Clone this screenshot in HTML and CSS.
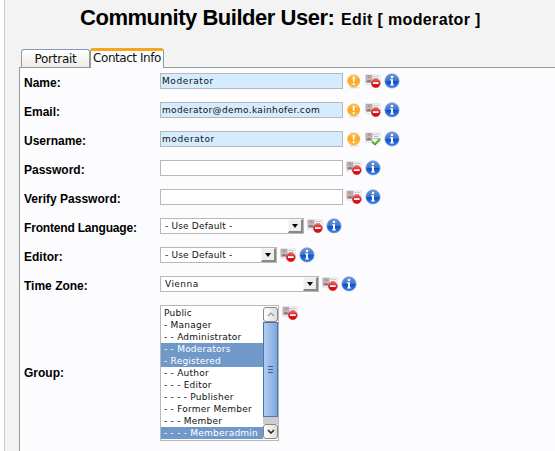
FILE: index.html
```
<!DOCTYPE html>
<html lang="en">
<head>
<meta charset="utf-8">
<title>Community Builder User</title>
<link rel="stylesheet" href="styles.css">
</head>
<body>
<svg class="defs" width="0" height="0">
  <defs>
    <linearGradient id="gold" x2="0" y2="1"><stop stop-color="#ffc658"/><stop offset=".5" stop-color="#fba51f"/><stop offset="1" stop-color="#ffc33b"/></linearGradient>
    <linearGradient id="blue" x2="0" y2="1"><stop stop-color="#6f96d9"/><stop offset=".48" stop-color="#3f74ce"/><stop offset=".52" stop-color="#0b50c8"/><stop offset="1" stop-color="#3a80ea"/></linearGradient>
    <linearGradient id="red" x2="0" y2="1"><stop stop-color="#ef6a6a"/><stop offset=".5" stop-color="#d91c20"/><stop offset="1" stop-color="#dc0000"/></linearGradient>
    <symbol id="alert" viewBox="0 0 16 16">
      <ellipse cx="8" cy="14.7" rx="5.5" ry=".8" fill="#ddd"/>
      <circle cx="7.7" cy="7.9" r="6" fill="url(#gold)" stroke="#eda33b" stroke-width=".7"/>
      <path d="M6.7 3.7h2l-.3 5.4H7z" fill="#fff"/><circle cx="7.7" cy="11" r="1.1" fill="#fff"/>
    </symbol>
    <symbol id="card" viewBox="0 0 16 16">
      <path d="M.4 1.6h15.2v10H.4z" fill="#f0f0f0" stroke="#dedede" stroke-width=".5"/>
      <path d="M1.2 2.4h5.8v7H1.2z" fill="#c9b4dc" stroke="#a598ac" stroke-width=".8"/>
      <path d="M2 9V7.8Q4 6.4 6 7.8V9z" fill="#7c8068"/><circle cx="4.1" cy="5.3" r="1.5" fill="#e0b060"/><path d="M2.8 4.3Q4 3 5.4 4.3" fill="none" stroke="#85705a" stroke-width=".8"/>
      <path d="M8.5 3.5h2m1 0h2M9 5.5h4M9 7.5h5" stroke="#b5b5b5" stroke-width=".9"/>
    </symbol>
    <symbol id="denied" viewBox="0 0 16 16">
      <use href="#card"/>
      <circle cx="10.8" cy="10.2" r="4.5" fill="url(#red)" stroke="#d84040" stroke-width=".4"/><path d="M8 9.2h5.6v1.8H8z" fill="#fff"/>
    </symbol>
    <symbol id="allowed" viewBox="0 0 16 16">
      <use href="#card"/>
      <path d="M7 10.5l3 2.7 5-5.2" fill="none" stroke="#48a72a" stroke-width="2.2"/><path d="M7 10.1l3 2.3 5-4.8" fill="none" stroke="#8cdc61" stroke-width=".7"/>
    </symbol>
    <symbol id="info" viewBox="0 0 16 16">
      <circle cx="8" cy="7.9" r="7.1" fill="url(#blue)" stroke="#7296d5" stroke-width=".7"/>
      <circle cx="8" cy="4" r="1.3" fill="#fff"/><path d="M6 6.3h3v5.2h1v1H6v-1h1V7.3H6z" fill="#fff"/>
    </symbol>
  </defs>
</svg>
<main class="page">
  <h1 class="title">Community Builder User: <small>Edit [ moderator ]</small></h1>
  <nav class="tabs"><span class="tab">Portrait</span><span class="tab active">Contact Info</span></nav>
  <form class="panel">
    <div class="row"><b class="label">Name:</b><div class="field"><span class="box required">Moderator</span><svg class="icon"><use href="#alert"/></svg><svg class="icon"><use href="#denied"/></svg><svg class="icon"><use href="#info"/></svg></div></div>
    <div class="row"><b class="label">Email:</b><div class="field"><span class="box required email">moderator@demo.kainhofer.com</span><svg class="icon"><use href="#alert"/></svg><svg class="icon"><use href="#denied"/></svg><svg class="icon"><use href="#info"/></svg></div></div>
    <div class="row"><b class="label">Username:</b><div class="field"><span class="box required">moderator</span><svg class="icon"><use href="#alert"/></svg><svg class="icon"><use href="#allowed"/></svg><svg class="icon"><use href="#info"/></svg></div></div>
    <div class="row"><b class="label">Password:</b><div class="field"><span class="box"></span><svg class="icon"><use href="#denied"/></svg><svg class="icon"><use href="#info"/></svg></div></div>
    <div class="row"><b class="label">Verify Password:</b><div class="field"><span class="box"></span><svg class="icon"><use href="#denied"/></svg><svg class="icon"><use href="#info"/></svg></div></div>
    <div class="row"><b class="label tight">Frontend Language:</b><div class="field"><span class="box select language">- Use Default -<i class="drop"></i></span><svg class="icon"><use href="#denied"/></svg><svg class="icon"><use href="#info"/></svg></div></div>
    <div class="row"><b class="label">Editor:</b><div class="field"><span class="box select editor">- Use Default -<i class="drop"></i></span><svg class="icon"><use href="#denied"/></svg><svg class="icon"><use href="#info"/></svg></div></div>
    <div class="row"><b class="label">Time Zone:</b><div class="field"><span class="box select zone">Vienna<i class="drop"></i></span><svg class="icon"><use href="#denied"/></svg><svg class="icon"><use href="#info"/></svg></div></div>
    <div class="row group"><b class="label">Group:</b><div class="field">
      <div class="list">
        <ul class="options">
          <li>Public</li>
          <li>- Manager</li>
          <li>- - Administrator</li>
          <li class="selected">- - Moderators</li>
          <li class="selected">- Registered</li>
          <li>- - Author</li>
          <li>- - - Editor</li>
          <li>- - - - Publisher</li>
          <li>- - Former Member</li>
          <li>- - - Member</li>
          <li class="selected">- - - - Memberadmin</li>
        </ul>
        <div class="scroll">
          <span class="arrow"><svg width="8" height="5" viewBox="0 0 8 5"><path d="M1 4l3-3 3 3" fill="none" stroke="#999" stroke-width="1.2"/></svg></span>
          <span class="thumb"><i></i><i></i><i></i></span>
          <span class="track"></span>
          <span class="arrow"><svg width="8" height="5" viewBox="0 0 8 5"><path d="M1 1l3 3 3-3" fill="none" stroke="#222" stroke-width="1.5"/></svg></span>
        </div>
      </div>
      <svg class="icon"><use href="#denied"/></svg></div></div>
  </form>
</main>
</body>
</html>
```
FILE: styles.css
```
* { box-sizing: border-box; }
body { margin: 0; background: #fff; overflow: hidden; font: 9px "DejaVu Sans", sans-serif; color: #111; }
.defs { display: block; }
.page { margin-left: 4px; height: 451px; border-left: 1px solid #ccc; background: #f3f3f3; overflow: hidden; display: flex; flex-direction: column; }
.title { margin: 0; height: 48px; padding: 5px 0 0 75px; font: bold 22px/26px "Liberation Sans", sans-serif; letter-spacing: -.47px; color: #000; white-space: nowrap; }
.title small { margin-left: 1px; font-size: 16px; letter-spacing: .35px; }
.tabs { display: flex; align-items: flex-end; height: 20px; padding-left: 16px; margin-bottom: -1px; z-index: 1; font: 12px "DejaVu Sans", sans-serif; }
.tab { width: 69px; height: 18px; margin-bottom: 1px; border: 1px solid #919b9c; border-top-color: #7f9db9; border-bottom: 0; border-radius: 3px 3px 0 0; background: linear-gradient(#fff, #ecebe6); text-align: center; line-height: 18px; letter-spacing: -.25px; white-space: nowrap; }
.tab.active { width: 74px; height: 20px; margin-bottom: 0; border-top: 3px solid #f6a51c; border-radius: 3px 3px 0 0; background: #fcfcfe; letter-spacing: -.45px; line-height: 14px; }
.panel { flex: 1; margin: 0 0 0 14px; border: solid #919b9c; border-width: 1px 0 0 1px; background: #fcfcfe; }
.row { height: 29px; display: flex; align-items: center; padding-left: 4px; }
.label { width: 136px; font: bold 12px/14px "Liberation Sans", sans-serif; color: #000; white-space: nowrap; }
.tight { letter-spacing: -.18px; }
.field { display: flex; gap: 3px; align-items: flex-start; height: 19px; }
.box { display: block; position: relative; width: 183px; height: 16px; border: 1px solid #b8b8b8; background: #fff; padding-left: 1px; line-height: 15px; letter-spacing: .6px; white-space: nowrap; }
.required { background: #d5ecff; }
.email { letter-spacing: .35px; }
.select { padding-left: 4px; letter-spacing: .18px; }
.language { width: 144px; }
.editor { width: 117px; }
.zone { width: 159px; letter-spacing: .45px; }
.drop { position: absolute; right: 0; top: 0; width: 15px; height: 14px; background: #eee; border: solid #f8f8f8; border-width: 1px 2px 2px 1px; border-right-color: #888; border-bottom-color: #888; }
.drop::after { content: ""; position: absolute; left: 3px; top: 4px; border: 3px solid transparent; border-top: 4px solid #000; border-bottom: 0; }
.icon { display: block; width: 16px; height: 16px; }
.group { height: 146px; }
.group .field { height: 136px; }
.list { display: flex; width: 119px; height: 136px; border: 1px solid #b8b8b8; background: #fff; padding: 1px 0; }
.options { list-style: none; width: 102px; margin: 0; padding: 0; }
.options li { height: 12px; padding-left: 3px; line-height: 13px; letter-spacing: .23px; white-space: pre; }
.options .selected { background: #7099ca; color: #fff; }
.scroll { width: 15px; display: flex; flex-direction: column; }
.arrow { height: 15px; display: flex; align-items: center; justify-content: center; border: 1px solid #888; border-radius: 3px; background: linear-gradient(90deg, #fff, #ddd); }
.thumb { height: 95px; border: 1px solid #4b76ac; background: linear-gradient(90deg, #b0cdf0, #7fa8dd); display: flex; flex-direction: column; align-items: center; justify-content: center; gap: 2px; }
.thumb i { width: 5px; height: 1px; background: #386096; }
.track { flex: 1; background: #ccc; }
```
